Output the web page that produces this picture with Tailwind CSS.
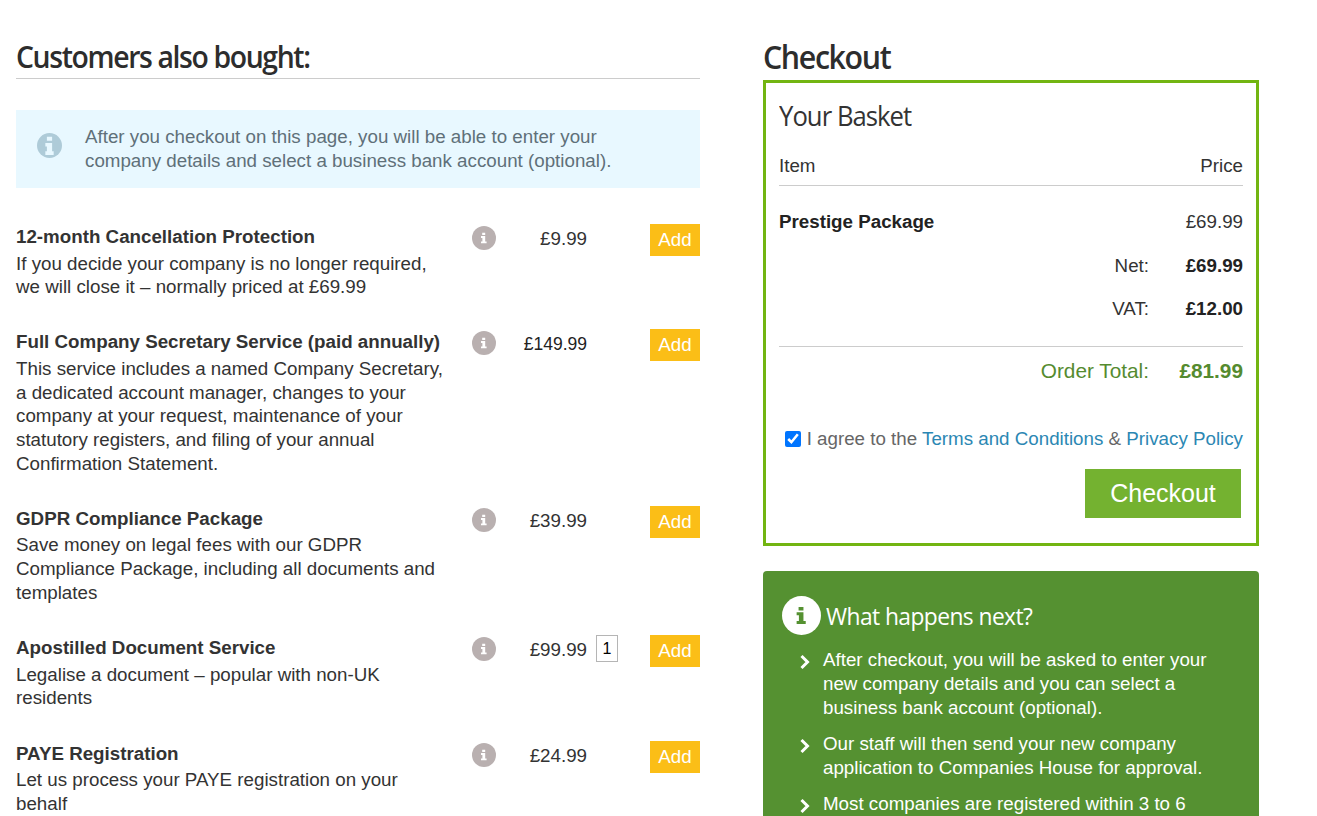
<!DOCTYPE html>
<html><head><meta charset="utf-8"><script src="https://cdn.jsdelivr.net/npm/@tailwindcss/browser@4"></script></head>
<body class="bg-white">
<div class="h-[816px] w-[1317px] overflow-hidden flex pl-4 gap-[63px] font-['Liberation_Sans',sans-serif] text-[18.75px] text-[#333]">
  <div class="w-[684px] shrink-0">
    <h2 class="h-[79px] pt-[36px] border-b border-[#ccc] font-['Open_Sans',sans-serif] font-semibold text-[31px] leading-[40px] tracking-[-1.5px] text-[#2d2d2d]"><span class="inline-block origin-left scale-x-[0.915]">Customers also bought:</span></h2>
    <div class="mt-[31px] h-[78px] bg-[#e8f8ff] flex items-center pl-[21px] text-[#5f7079] leading-[24px]">
      <svg class="w-[25px] h-[25px] shrink-0 -mt-2" viewBox="0 0 24 24"><circle cx="12" cy="12" r="12" fill="#aecbd8"/><path d="M9.500 3.500h5v4h-5zM8 9.500h6.500v8h1.500v3.500h-8v-3.500h1.500v-4.500h-1.500z" fill="#e8f8ff"/></svg>
      <p class="ml-[23px]">After you checkout on this page, you will be able to enter your<br>company details and select a business bank account (optional).</p>
    </div>
    <div class="mt-[36px]">
      <div class="flex items-start pb-[30.500px]">
        <div class="w-[430px] shrink-0"><h3 class="font-bold leading-[26px] mb-[1.500px]">12-month Cancellation Protection</h3><p class="leading-[23.7px]">If you decide your company is no longer required, we will close it – normally priced at £69.99</p></div>
        <svg class="w-6 h-6 ml-[26px] mt-[2px] shrink-0" viewBox="0 0 24 24"><circle cx="12" cy="12" r="12" fill="#b9b0b0"/><path d="M10.200 6.700h3v2.200h-3zM9 10h4.200v5.400h1.400v1.900h-5.600v-1.900h1.400v-3.500h-1.400z" fill="#fff"/></svg>
        <div class="w-[91px] text-right mt-[3px] leading-[24px]">£9.99</div>
        <button class="ml-[63px] w-[50px] h-8 bg-[#fbbe17] text-white">Add</button>
      </div>
      <div class="flex items-start pb-[30.500px]">
        <div class="w-[430px] shrink-0"><h3 class="font-bold leading-[26px] mb-[1.500px] whitespace-nowrap">Full Company Secretary Service (paid annually)</h3><p class="leading-[23.7px]">This service includes a named Company Secretary, a dedicated account manager, changes to your company at your request, maintenance of your statutory registers, and filing of your annual Confirmation Statement.</p></div>
        <svg class="w-6 h-6 ml-[26px] mt-[2px] shrink-0" viewBox="0 0 24 24"><circle cx="12" cy="12" r="12" fill="#b9b0b0"/><path d="M10.200 6.700h3v2.200h-3zM9 10h4.200v5.400h1.400v1.900h-5.600v-1.900h1.400v-3.500h-1.400z" fill="#fff"/></svg>
        <div class="w-[91px] text-right mt-[3px] leading-[24px] text-[17.5px] text-[#222]">£149.99</div>
        <button class="ml-[63px] w-[50px] h-8 bg-[#fbbe17] text-white">Add</button>
      </div>
      <div class="flex items-start pb-[30.500px]">
        <div class="w-[430px] shrink-0"><h3 class="font-bold leading-[26px] mb-[1.500px]">GDPR Compliance Package</h3><p class="leading-[23.7px]">Save money on legal fees with our GDPR Compliance Package, including all documents and templates</p></div>
        <svg class="w-6 h-6 ml-[26px] mt-[2px] shrink-0" viewBox="0 0 24 24"><circle cx="12" cy="12" r="12" fill="#b9b0b0"/><path d="M10.200 6.700h3v2.200h-3zM9 10h4.200v5.400h1.400v1.900h-5.600v-1.900h1.400v-3.500h-1.400z" fill="#fff"/></svg>
        <div class="w-[91px] text-right mt-[3px] leading-[24px]">£39.99</div>
        <button class="ml-[63px] w-[50px] h-8 bg-[#fbbe17] text-white">Add</button>
      </div>
      <div class="flex items-start pb-[31px]">
        <div class="w-[430px] shrink-0"><h3 class="font-bold leading-[26px] mb-[1.500px]">Apostilled Document Service</h3><p class="leading-[23.7px] pr-[40px]">Legalise a document – popular with non-UK residents</p></div>
        <svg class="w-6 h-6 ml-[26px] mt-[2px] shrink-0" viewBox="0 0 24 24"><circle cx="12" cy="12" r="12" fill="#b9b0b0"/><path d="M10.200 6.700h3v2.200h-3zM9 10h4.200v5.400h1.400v1.900h-5.600v-1.900h1.400v-3.500h-1.400z" fill="#fff"/></svg>
        <div class="w-[91px] text-right mt-[3px] leading-[24px]">£99.99</div>
        <input class="ml-[9px] w-[22px] h-[27px] border border-[#b5b5b5] text-center text-[16px] text-black" value="1">
        <button class="ml-[32px] w-[50px] h-8 bg-[#fbbe17] text-white">Add</button>
      </div>
      <div class="flex items-start">
        <div class="w-[430px] shrink-0"><h3 class="font-bold leading-[26px] mb-[1.500px]">PAYE Registration</h3><p class="leading-[23.7px]">Let us process your PAYE registration on your behalf</p></div>
        <svg class="w-6 h-6 ml-[26px] mt-[2px] shrink-0" viewBox="0 0 24 24"><circle cx="12" cy="12" r="12" fill="#b9b0b0"/><path d="M10.200 6.700h3v2.200h-3zM9 10h4.200v5.400h1.400v1.900h-5.600v-1.900h1.400v-3.500h-1.400z" fill="#fff"/></svg>
        <div class="w-[91px] text-right mt-[3px] leading-[24px]">£24.99</div>
        <button class="ml-[63px] w-[50px] h-8 bg-[#fbbe17] text-white">Add</button>
      </div>
    </div>
  </div>
  <div class="w-[496px] shrink-0">
    <h2 class="h-[80px] pt-[37px] font-['Open_Sans',sans-serif] font-semibold text-[33px] leading-[40px] tracking-[-1.5px] text-[#2d2d2d]"><span class="inline-block origin-left scale-x-[0.92]">Checkout</span></h2>
    <div class="h-[466px] border-[3px] border-[#72b511] px-[13px]">
      <h3 class="pt-[15px] font-['Open_Sans',sans-serif] text-[27px] leading-[36px] tracking-[-1px] text-[#333]"><span class="inline-block origin-left scale-x-[0.95]">Your Basket</span></h3>
      <div class="mt-[18px] h-[34px] flex justify-between border-b border-[#ccc] leading-[24px] pb-[7px] pt-[2px]"><span>Item</span><span>Price</span></div>
      <div class="mt-[24px] flex justify-between leading-[24px]"><b class="text-[#222]">Prestige Package</b><span>£69.99</span></div>
      <div class="mt-[20px] flex justify-end leading-[24px]"><span>Net:</span><b class="w-[94px] text-right text-[#222]">£69.99</b></div>
      <div class="mt-[19px] flex justify-end leading-[24px]"><span>VAT:</span><b class="w-[94px] text-right text-[#222]">£12.00</b></div>
      <div class="mt-[25px] border-t border-[#ccc] pt-[12px] flex justify-end text-[20.8px] leading-[24px] text-[#558b2f]"><span>Order Total:</span><b class="w-[94px] text-right">£81.99</b></div>
      <div class="mt-[44px] flex items-center justify-end leading-[24px] text-[#666]">
        <input type="checkbox" checked class="w-4 h-4 accent-[#0075ff] mr-[6px]"><span>I agree to the <a class="text-[#2b87b3]">Terms and Conditions</a> &amp; <a class="text-[#2b87b3]">Privacy Policy</a></span>
      </div>
      <div class="mt-[18px] flex justify-end pr-[2px]"><button class="w-[156px] h-[49px] bg-[#74b230] text-white text-[25px]">Checkout</button></div>
    </div>
    <div class="mt-[25px] bg-[#559131] rounded-[4px] text-white px-[19px] pt-[25px] h-[400px]">
      <div class="flex items-center">
        <svg class="w-[39px] h-[39px] shrink-0" viewBox="0 0 24 24"><circle cx="12" cy="12" r="12" fill="#fff"/><path d="M10.200 6.700h3v2.200h-3zM9 10h4.200v5.400h1.400v1.900h-5.600v-1.900h1.400v-3.500h-1.400z" fill="#559131"/></svg>
        <h3 class="ml-[5px] font-['Open_Sans',sans-serif] font-medium text-[24px] leading-[39px] tracking-[-0.6px]"><span class="inline-block origin-left scale-x-[0.95]">What happens next?</span></h3>
      </div>
      <ul class="mt-[13px] leading-[24px]">
        <li class="flex mb-[12px]"><svg class="w-[12px] h-[16px] ml-[17px] mt-[6px] shrink-0" viewBox="0 0 12 16"><path d="M2.500 2 8.500 8 2.500 14" fill="none" stroke="#fff" stroke-width="3"/></svg><span class="ml-[12px]">After checkout, you will be asked to enter your new company details and you can select a business bank account (optional).</span></li>
        <li class="flex mb-[12px]"><svg class="w-[12px] h-[16px] ml-[17px] mt-[6px] shrink-0" viewBox="0 0 12 16"><path d="M2.500 2 8.500 8 2.500 14" fill="none" stroke="#fff" stroke-width="3"/></svg><span class="ml-[12px]">Our staff will then send your new company application to Companies House for approval.</span></li>
        <li class="flex"><svg class="w-[12px] h-[16px] ml-[17px] mt-[6px] shrink-0" viewBox="0 0 12 16"><path d="M2.500 2 8.500 8 2.500 14" fill="none" stroke="#fff" stroke-width="3"/></svg><span class="ml-[12px]">Most companies are registered within 3 to 6</span></li>
      </ul>
    </div>
  </div>
</div>
</body></html>
